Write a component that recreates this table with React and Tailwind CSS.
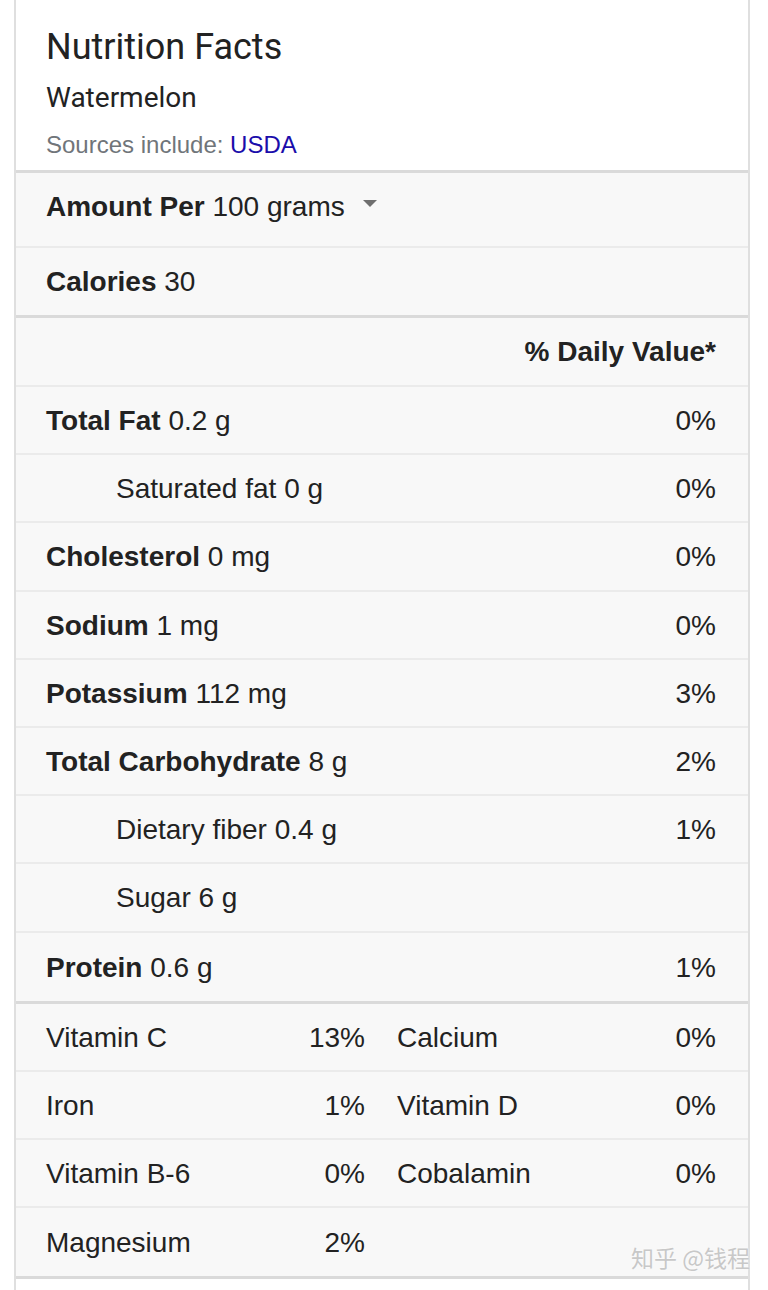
import React from 'react';

const rows = [
    { label: "Total Fat", value: "0.2 g", pct: "0%" },
    { label: "Saturated fat", value: "0 g", pct: "0%", sub: true },
    { label: "Cholesterol", value: "0 mg", pct: "0%" },
    { label: "Sodium", value: "1 mg", pct: "0%" },
    { label: "Potassium", value: "112 mg", pct: "3%" },
    { label: "Total Carbohydrate", value: "8 g", pct: "2%" },
    { label: "Dietary fiber", value: "0.4 g", pct: "1%", sub: true },
    { label: "Sugar", value: "6 g", pct: "", sub: true },
    { label: "Protein", value: "0.6 g", pct: "1%" },
];

const vitamins = [
    [{ name: "Vitamin C", pct: "13%" }, { name: "Calcium", pct: "0%" }],
    [{ name: "Iron", pct: "1%" }, { name: "Vitamin D", pct: "0%" }],
    [{ name: "Vitamin B-6", pct: "0%" }, { name: "Cobalamin", pct: "0%" }],
    [{ name: "Magnesium", pct: "2%" }, null],
];

function NutrientRow({ row, last }) {
    return (
        <div
            className={
                "flex items-center justify-between h-[68.2px] pr-[32px] pt-[2px] " +
                (row.sub ? "pl-[100px] " : "pl-[30px] ") +
                (last ? "" : "border-b-2 border-[#ebebeb]")
            }
        >
            <div>
                {row.sub ? (
                    <span>{row.label} {row.value}</span>
                ) : (
                    <span>
                        <b className="font-bold">{row.label}</b> {row.value}
                    </span>
                )}
            </div>
            <div>{row.pct}</div>
        </div>
    );
}

export default function App() {
    return (
        <div className="min-h-screen bg-white text-[#222222] font-['Liberation_Sans',Arial,sans-serif] text-[28px]">
            <div className="relative ml-[14px] w-[736px] min-h-[1290px] border-x-2 border-[#dfdfdf]">
                {/* header */}
                <div className="bg-white pl-[30px] pt-[25px] h-[170px]">
                    <div className="font-['Roboto',sans-serif] text-[36px] leading-[44px]">Nutrition Facts</div>
                    <div className="font-['Roboto',sans-serif] text-[28px] leading-[34px] mt-[12px]">Watermelon</div>
                    <div className="text-[24px] leading-[30px] mt-[15px] text-[#70757a]">
                        Sources include: <span className="text-[#1a0dab]">USDA</span>
                    </div>
                </div>

                <div className="bg-[#f8f8f8] border-t-[3px] border-[#dadada]">
                    <div className="flex items-center h-[75px] pl-[30px] pb-[6px] border-b-2 border-[#ebebeb]">
                        <span>
                            <b className="font-bold">Amount Per</b> 100 grams
                        </span>
                        <svg className="ml-[18px] mb-[6px]" width="14" height="7" viewBox="0 0 14 7">
                            <path d="M0 0 L14 0 L7 7 Z" fill="#6f6f6f" />
                        </svg>
                    </div>
                    <div className="flex items-center h-[70px] pl-[30px] border-b-[3px] border-[#dadada]">
                        <span>
                            <b className="font-bold">Calories</b> 30
                        </span>
                    </div>
                    <div className="flex items-center justify-end h-[69px] pr-[32px] border-b-2 border-[#ebebeb]">
                        <b className="font-bold">% Daily Value*</b>
                    </div>
                    {rows.map((row, i) => (
                        <NutrientRow key={row.label} row={row} last={i === rows.length - 1} />
                    ))}
                    <div className="border-t-[3px] border-b-[3px] border-[#dadada]">
                        {vitamins.map((pair, i) => (
                            <div
                                key={i}
                                className={
                                    "grid grid-cols-2 gap-[32px] h-[68px] pl-[30px] pr-[32px] pt-[3px] items-center " +
                                    (i < vitamins.length - 1 ? "border-b-2 border-[#ebebeb]" : "")
                                }
                            >
                                {pair.map((v, j) =>
                                    v ? (
                                        <div key={j} className="flex justify-between">
                                            <span>{v.name}</span>
                                            <span>{v.pct}</span>
                                        </div>
                                    ) : (
                                        <div key={j}></div>
                                    )
                                )}
                            </div>
                        ))}
                    </div>
                </div>

                <div className="absolute right-[-2px] top-[1240px] text-[23px] text-[#c8c8c8] font-['Noto_Sans_CJK_SC',sans-serif] [text-shadow:0_0_2px_#fff]">
                    知乎 @钱程
                </div>
            </div>
        </div>
    );
}
